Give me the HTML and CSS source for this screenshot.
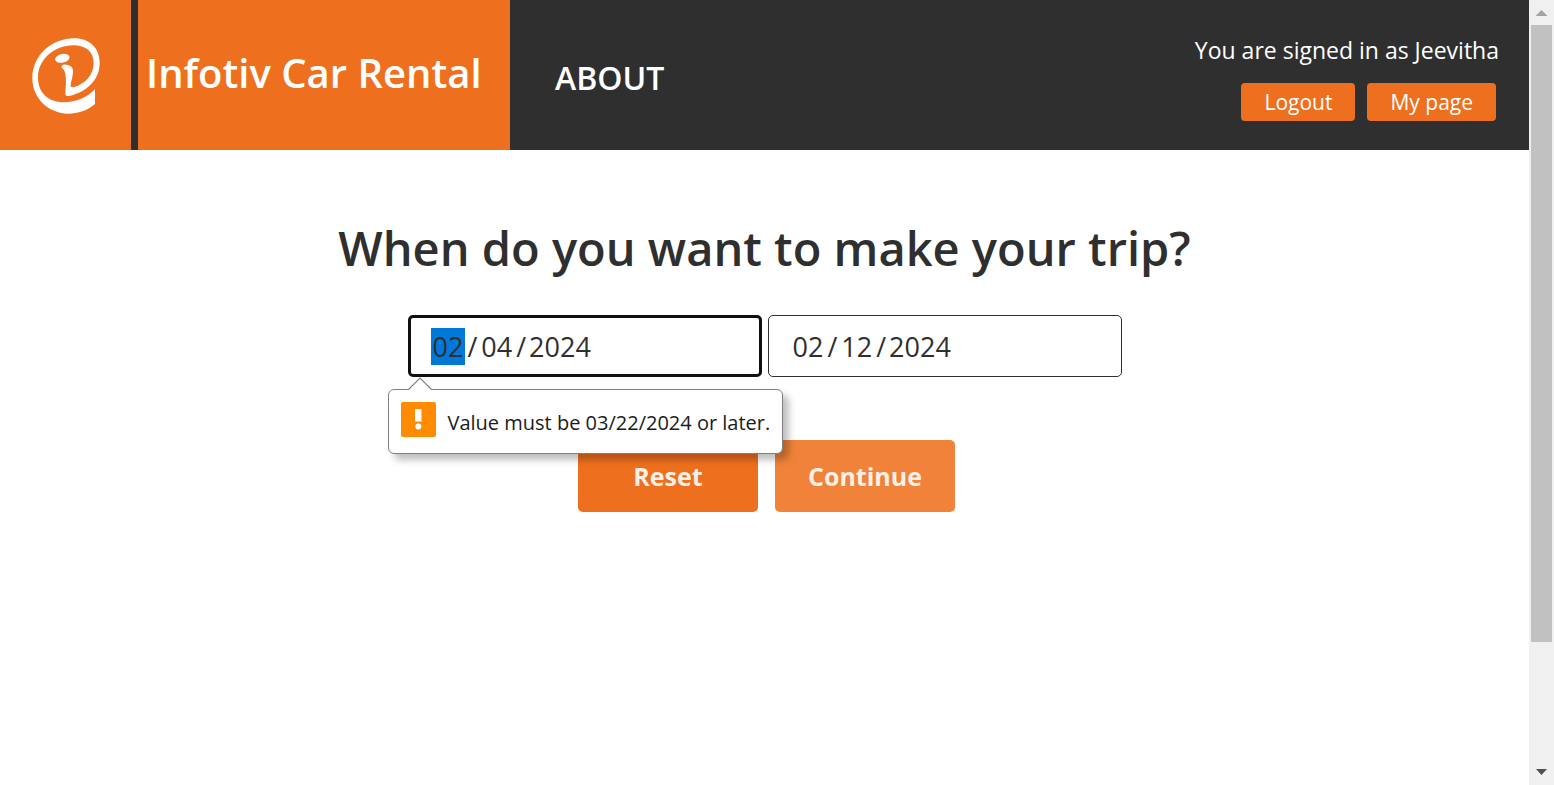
FILE: index.html
```html
<!DOCTYPE html>
<html lang="en">
<head>
<meta charset="utf-8">
<title>Infotiv Car Rental</title>
<link rel="stylesheet" href="styles.css">
</head>
<body>
<div class="page">
  <header class="header">
    <a class="logo" href="#" aria-label="Infotiv">
      <svg class="logo-mark" viewBox="95 114 204 228" aria-hidden="true">
        <path fill="#fff" d="M284 268V312C262 332 232 341 204 341C145 341 96 295 96 235C96 165 155 115 222 115C268 115 298 145 298 188C298 238 262 275 206 288C199 289 194 286 195 278C197 255 198 240 195 222C193 212 190 208 185 205C181 196 188 193 197 194C212 195 219 203 218 215C217 235 211 245 211 258C212 262 217 262 222 261C256 249 280 225 280 188C280 155 255 136 220 136C160 136 113 180 113 232C113 280 145 307 190 307C228 307 260 292 284 268Z"/>
        <ellipse fill="#fff" cx="186" cy="175" rx="22" ry="13" transform="rotate(-12 186 175)"/>
      </svg>
    </a>
    <div class="brand"><h1 class="brand-title">Infotiv Car Rental</h1></div>
    <nav class="nav"><a class="nav-link" href="#">ABOUT</a></nav>
    <div class="account">
      <p class="welcome">You are signed in as Jeevitha</p>
      <div class="account-actions">
        <button class="small-button" type="button">Logout</button>
        <button class="small-button" type="button">My page</button>
      </div>
    </div>
  </header>
  <main class="main">
    <h2 class="question">When do you want to make your trip?</h2>
    <form class="trip">
      <div class="dates">
        <div class="date-field">
          <input class="date date-active" type="date" value="2024-02-04" aria-label="Start date" aria-describedby="start-error">
          <div class="bubble" id="start-error" role="alert">
            <svg class="bubble-arrow" viewBox="0 0 26 13" aria-hidden="true"><path d="M1 13L13 1L25 13" fill="#fff" stroke="#808080" stroke-width="1.2"/></svg>
            <svg class="bubble-icon" viewBox="0 0 35 35" aria-hidden="true"><rect width="35" height="35" rx="2" fill="#ff8c00"/><path d="M14 7H20.500V19.500H14Z" fill="#fff"/><circle cx="17.300" cy="24.500" r="3" fill="#fff"/></svg>
            <span>Value must be 03/22/2024 or later.</span>
          </div>
        </div>
        <input class="date" type="date" value="2024-02-12" aria-label="End date">
      </div>
      <div class="actions">
        <button class="action" type="button">Reset</button>
        <button class="action action-hover" type="button">Continue</button>
      </div>
    </form>
  </main>
</div>
<div class="scrollbar" aria-hidden="true">
  <svg class="scroll-arrow" viewBox="0 0 25 25"><path d="M12.500 10L18.500 16H6.500Z" fill="#a3a3a3"/></svg>
  <div class="scroll-track"><div class="scroll-thumb"></div></div>
  <svg class="scroll-arrow" viewBox="0 0 25 25"><path d="M7 9H18L12.500 15Z" fill="#505050"/></svg>
</div>
</body>
</html>
```
FILE: styles.css
```css
* { box-sizing: border-box; }
body {
  margin: 0;
  display: flex;
  min-height: 100vh;
  background: #fff;
  color: #2f2f2f;
  font-family: "Trebuchet MS", "Open Sans", sans-serif;
}
h1, h2, p { margin: 0; }
button, input { font-family: inherit; }
.page { flex: 1; min-width: 0; }

.header {
  display: flex;
  height: 150px;
  background: #2f2f2f;
  color: #fff;
}
.logo {
  display: flex;
  align-items: center;
  justify-content: center;
  width: 131px;
  margin-right: 7px;
  padding-top: 2px;
  background: #ee701e;
}
.logo-mark { width: 68px; height: 76px; }
.brand {
  display: flex;
  align-items: center;
  width: 372px;
  padding: 0 0 6px 8px;
  background: #ee701e;
}
.brand-title { font-size: 40px; font-weight: 600; white-space: nowrap; }
.nav { display: flex; align-items: center; padding: 4px 0 0 45px; }
.nav-link { color: #fff; font-size: 32px; font-weight: 600; text-decoration: none; }
.account {
  display: flex;
  flex-direction: column;
  align-items: flex-end;
  margin-left: auto;
  padding: 34px 30px 0 0;
}
.welcome { font-size: 23px; line-height: 32px; }
.account-actions { display: flex; gap: 12px; padding: 17px 3px 0 0; }
.small-button {
  height: 38px;
  padding: 0 23px;
  border: 0;
  border-radius: 4px;
  background: #ee701e;
  color: #fff;
  font-size: 21px;
  line-height: 38px;
}

.main { display: flex; flex-direction: column; align-items: center; padding-top: 66px; }
.question { font-size: 47px; font-weight: 600; line-height: 64px; }
.trip { display: flex; flex-direction: column; align-items: center; padding-top: 35px; }
.dates { display: flex; gap: 6px; }
.date-field { position: relative; }
.date {
  display: block;
  width: 354px;
  height: 62px;
  padding: 0 22px;
  border: 1px solid #2f2f2f;
  border-radius: 5px;
  background: #fff;
  color: #2f2f2f;
  font-size: 27px;
}
.date-active { border: 3px solid #101010; padding: 0 20px; }
.date::-webkit-calendar-picker-indicator { display: none; }
.date::-webkit-datetime-edit-text { padding: 0 2px; }
.date::-webkit-datetime-edit-month-field { padding: 0 2px; }
.date-active::-webkit-datetime-edit-month-field { background: #0078d7; color: #2f2f2f; }
.date::-webkit-datetime-edit-day-field { padding: 0 2px; }

.bubble {
  position: absolute;
  top: 74px;
  left: -20px;
  z-index: 1;
  display: flex;
  align-items: center;
  gap: 12px;
  height: 65px;
  padding: 2px 12px 0;
  border: 1px solid #808080;
  border-radius: 6px;
  background: #fff;
  box-shadow: 6px 6px 7px rgba(0, 0, 0, 0.25);
  color: #1b1b1b;
  font-family: "Segoe UI", "Open Sans", sans-serif;
  font-size: 20px;
  white-space: nowrap;
}
.bubble-arrow { position: absolute; top: -13px; left: 18px; width: 26px; height: 13px; }
.bubble-icon { width: 35px; height: 35px; margin-bottom: 7px; }

.actions { display: flex; gap: 17px; padding: 63px 0 0 4px; }
.action {
  width: 180px;
  height: 72px;
  border: 0;
  border-radius: 5px;
  background: #ee701e;
  color: #fdf0e8;
  font-size: 25px;
  font-weight: 700;
}
.action-hover { background: #f08339; }

.scrollbar {
  position: sticky;
  top: 0;
  display: flex;
  flex-direction: column;
  width: 25px;
  height: 100vh;
  background: #f0f0f0;
}
.scroll-arrow { display: block; width: 25px; height: 25px; }
.scroll-track { flex: 1; padding: 0 2px; }
.scroll-thumb { height: 84%; background: #c1c1c1; }
```
